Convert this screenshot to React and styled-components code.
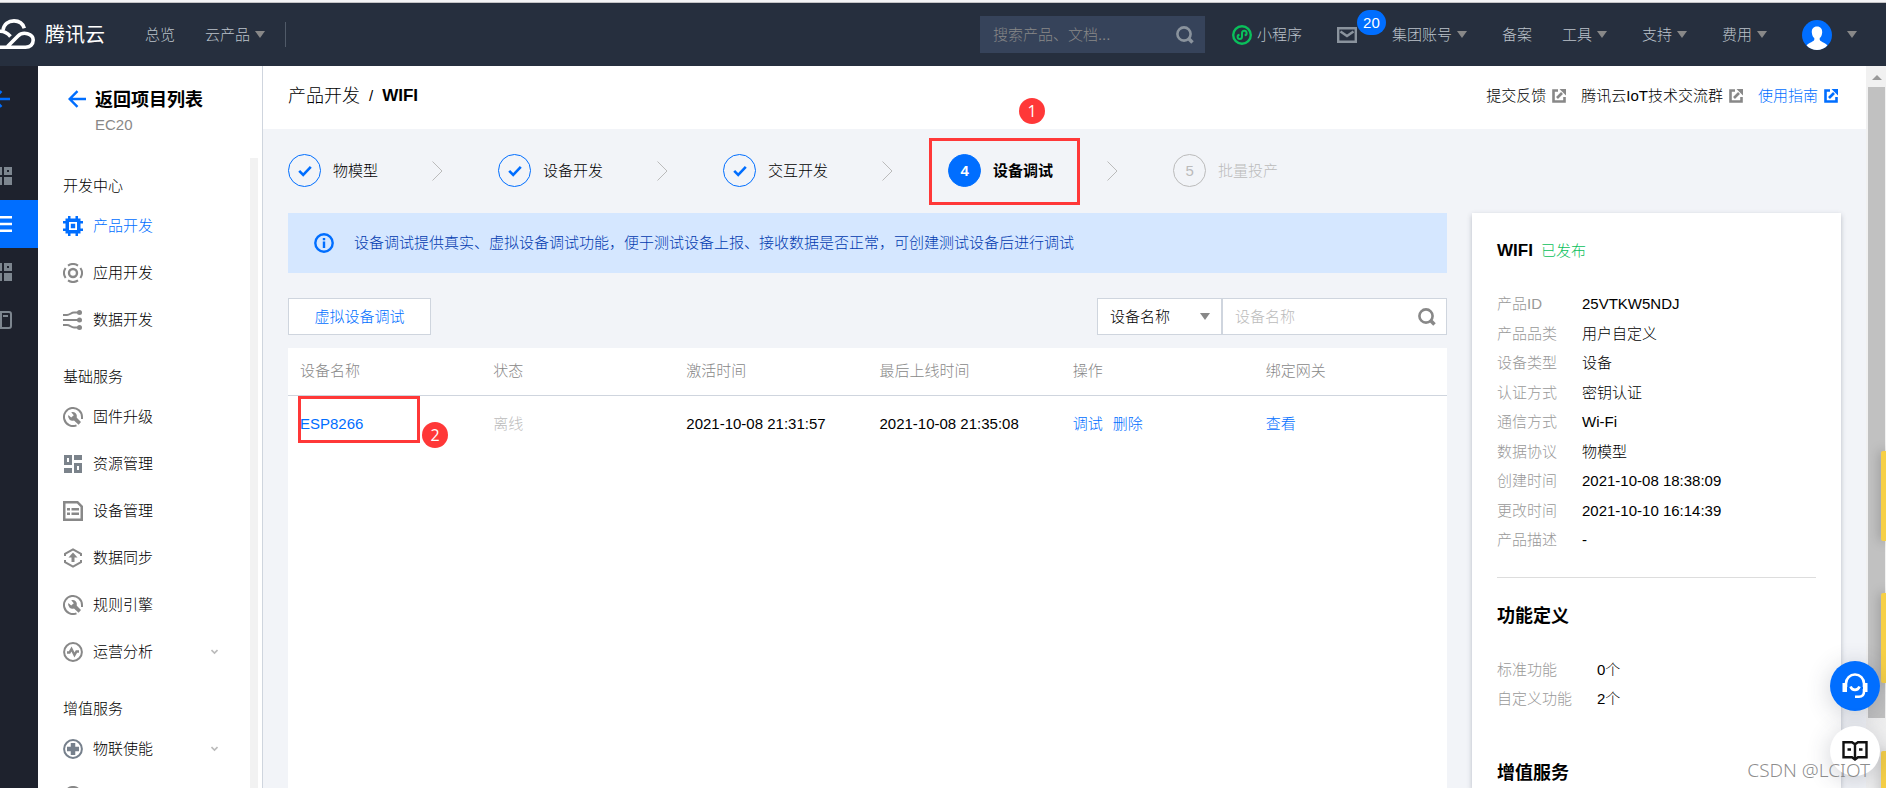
/**
 *
 * App
 *
 */

import React, { useState } from 'react';
import styled, { createGlobalStyle, css } from 'styled-components';

const SANS = "'Liberation Sans', Arial, 'Noto Sans CJK SC', sans-serif";

const BLUE = '#006eff';
const RED = '#ff3838';
const BORDER = '#cfd5de';

const MENU = [
  {
    title: '开发中心',
    items: [
      { name: '产品开发', icon: 'chip', active: true },
      { name: '应用开发', icon: 'target' },
      { name: '数据开发', icon: 'flow' },
    ],
  },
  {
    title: '基础服务',
    items: [
      { name: '固件升级', icon: 'wrench' },
      { name: '资源管理', icon: 'blocks' },
      { name: '设备管理', icon: 'list' },
      { name: '数据同步', icon: 'sync' },
      { name: '规则引擎', icon: 'wrench' },
      { name: '运营分析', icon: 'pulse', expandable: true },
    ],
  },
  {
    title: '增值服务',
    items: [
      { name: '物联使能', icon: 'plus', expandable: true },
      { icon: 'target' },
    ],
  },
];

const STEPS = [
  { name: '物模型', status: 'done' },
  { name: '设备开发', status: 'done' },
  { name: '交互开发', status: 'done' },
  { name: '设备调试', status: 'current' },
  { name: '批量投产', status: 'todo' },
];

const DEVICES = [
  {
    name: 'ESP8266',
    status: '离线',
    activated: '2021-10-08 21:31:57',
    lastOnline: '2021-10-08 21:35:08',
  },
];

const PRODUCT = [
  ['产品ID', '25VTKW5NDJ'],
  ['产品品类', '用户自定义'],
  ['设备类型', '设备'],
  ['认证方式', '密钥认证'],
  ['通信方式', 'Wi-Fi'],
  ['数据协议', '物模型'],
  ['创建时间', '2021-10-08 18:38:09'],
  ['更改时间', '2021-10-10 16:14:39'],
  ['产品描述', '-'],
];

const FEATURES = [['标准功能', '0个'], ['自定义功能', '2个']];

/* icons */

const MENU_ICONS = {
  chip: (
    <g fill="currentColor">
      <path fillRule="evenodd" d="M2.500 2.500h15v15h-15zM6 6v8h8V6z" />
      <path d="M7.800 7.800h4.400v4.400H7.800zM5 0h2.500v3H5zM12.500 0H15v3h-2.500zM5 17h2.500v3H5zM12.500 17H15v3h-2.500zM0 5h3v2.500H0zM0 12.500h3V15H0zM17 5h3v2.500h-3zM17 12.500h3V15h-3z" />
    </g>
  ),
  target: (
    <g fill="none" stroke="currentColor" strokeWidth="2">
      <circle cx="10" cy="10" r="4" strokeWidth="2.4" />
      <path d="M5 2.6a9 9 0 0 1 10 0M5 17.4a9 9 0 0 0 10 0M2.6 5a9 9 0 0 0 0 10M17.4 5a9 9 0 0 1 0 10" />
    </g>
  ),
  flow: (
    <g fill="none" stroke="currentColor" strokeWidth="2">
      <path d="M0 5h4c3 0 4-2.5 7-2.5h4M0 10h15M0 15h4c3 0 4 2.5 7 2.5h4" />
      <g fill="currentColor" stroke="none">
        <circle cx="16.5" cy="2.5" r="2.5" />
        <circle cx="16.5" cy="10" r="2.5" />
        <circle cx="16.5" cy="17.5" r="2.5" />
      </g>
    </g>
  ),
  wrench: (
    <g>
      <path
        d="M13.5 18.3A9 9 0 1 1 19 10v2"
        fill="none"
        stroke="currentColor"
        strokeWidth="2"
      />
      <path
        fill="currentColor"
        d="M8.2 5.2a4.4 4.4 0 0 1 5.6 5.5l4.2 4.2-2.4 2.9-4.6-4.4a4.4 4.4 0 0 1-5.7-5.5l2.9 2.7 2.6-2.4z"
      />
    </g>
  ),
  blocks: (
    <g fill="#7b838b">
      <path fillRule="evenodd" d="M1 1h8v10H1zM4 4v4h2V4zM11 9h8v10h-8zM14 12v4h2v-4z" />
      <path d="M11 1h8v5h-8zM1 14h8v5H1z" />
    </g>
  ),
  list: (
    <g fill="currentColor">
      <path fillRule="evenodd" d="M0 0h15l5 5v15H0zM2.500 2.500v15h15V6L14 2.500z" />
      <path d="M4 7h3v2.500H4zM8.500 7H16v2.500H8.500zM4 11.500h3V14H4zM8.500 11.500H16V14H8.500z" />
    </g>
  ),
  sync: (
    <g fill="none" stroke="currentColor" strokeWidth="2">
      <path d="M2 8V5.800L10 1.300l8 4.500V8M2 12v2.200l8 4.500 8-4.500V12" />
      <path d="M10 8v6" strokeWidth="3" />
      <path d="M10 4.500l4.500 5h-9z" fill="currentColor" stroke="none" />
    </g>
  ),
  pulse: (
    <g fill="none" stroke="currentColor" strokeWidth="2">
      <circle cx="10" cy="10" r="8.900" />
      <path d="M4 10.500h2.500l2-3.500 3 6 2-3.500H16" strokeWidth="2.400" />
    </g>
  ),
  plus: (
    <g fill="none" stroke="#76808c">
      <circle cx="10" cy="10" r="8.900" strokeWidth="2" />
      <path d="M10 4v12M4 10h12" strokeWidth="4.500" />
    </g>
  ),
};

const RAIL_GRID = (
  <svg width="12" height="18" viewBox="6 0 12 18" fill="#7d868f">
    <path fillRule="evenodd" d="M0 0h8v8H0zM10 0h8v8h-8zM13 3v2h2V3z" />
    <path d="M0 10h8v8H0zM10 10h8v8h-8z" />
  </svg>
);

const BackArrow = () => (
  <svg width="18" height="18" viewBox="0 0 18 18" fill="none" stroke={BLUE} strokeWidth="2.4">
    <path d="M18 9H2M9.500 1.200L1.700 9l7.800 7.800" />
  </svg>
);

const SearchIcon = ({ color }) => (
  <svg width="18" height="18" viewBox="0 0 18 18" fill="none" stroke={color}>
    <circle cx="8" cy="8" r="6.600" strokeWidth="2.600" />
    <path d="M12.300 12.300l4.200 4.200" strokeWidth="3.600" />
  </svg>
);

const ExternalIcon = () => (
  <svg width="14" height="14" viewBox="0 0 14 14" fill="none" stroke="currentColor">
    <path d="M6 1.500H1.500v11h11V8" strokeWidth="2.600" />
    <path d="M5 9l5-5" strokeWidth="2.600" />
    <path d="M7.500 0H14v6.500z" fill="currentColor" stroke="none" />
  </svg>
);

const CheckIcon = () => (
  <svg width="14" height="12" viewBox="0 0 14 12" fill="none" stroke={BLUE} strokeWidth="2.600">
    <path d="M1.200 5.800l4 4L12.800 1.800" />
  </svg>
);

class App extends React.PureComponent {
  render() {
    return (
      <Page>
        <GlobalStyle />
        <TopEdge />
        <Header />
        <Body>
          <Rail />
          <Sidebar />
          <Main>
            <PageHead>
              <Breadcrumb aria-label="breadcrumb">
                <a href="#products">产品开发</a>
                <i>/</i>
                <strong>WIFI</strong>
              </Breadcrumb>
              <HeadLinks>
                <HeadLink href="#feedback">
                  提交反馈 <ExternalIcon />
                </HeadLink>
                <HeadLink href="#group">
                  腾讯云IoT技术交流群 <ExternalIcon />
                </HeadLink>
                <HeadLink href="#guide" $primary>
                  使用指南 <ExternalIcon />
                </HeadLink>
              </HeadLinks>
            </PageHead>
            <Content>
              <Steps />
              <Columns>
                <DevicePanel />
                <ProductCard />
              </Columns>
            </Content>
          </Main>
          <Scrollbar aria-hidden="true">
            <ScrollArrow />
            <ScrollThumb />
          </Scrollbar>
        </Body>
        <StickyTabs aria-hidden="true">
          <StickyTab $height={90} />
          <StickyTab $height={90} $gap={52} />
          <StickyTab $height={90} $gap={68} />
        </StickyTabs>
        <FloatingTools>
          <FloatingButton type="button" aria-label="在线客服" $primary>
            <svg width="26" height="26" viewBox="0 0 26 26" fill="none" stroke="#fff" strokeWidth="2.600">
              <path d="M4 14V10.500a9 9 0 0 1 18 0V14" />
              <path d="M22 16v2.500c0 3.500-2 5.200-5 5.200h-4" />
              <path d="M8.500 13.500c1.500 4.500 7.500 4.500 9 0" />
              <path d="M.5 10H5v9H.5zM21 10h4.500v9H21z" fill="#fff" stroke="none" />
            </svg>
          </FloatingButton>
          <FloatingButton type="button" aria-label="文档">
            <svg width="26" height="22" viewBox="0 0 26 22" fill="none" stroke="#111" strokeWidth="2.400">
              <path d="M1.500 2.200H10l3 2 3-2h8.500v15H16l-3 2.300-3-2.300H1.500zM13 4v15" />
              <path d="M5.500 9.500H9M17 9.500h3.500" />
            </svg>
          </FloatingButton>
        </FloatingTools>
        <Watermark>CSDN @LCIOT</Watermark>
      </Page>
    );
  }
}

export default App;

function Header() {
  return (
    <TopBar>
      <Logo href="#home">
        <svg width="36" height="31" viewBox="0 19 36 31" fill="none" stroke="#fff" strokeWidth="3.600">
          <path d="M3 30C4 24 8.500 20.900 14 20.900c5 0 8.800 2.600 10.300 7.300" />
          <path d="M-2 31.500C3 30.500 7 32.500 10.500 36.500" />
          <path d="M7.500 46.500L18 36c5-5 15.200-2.500 15.200 4 0 4.500-3.300 7.200-7.700 7.200H-2" />
        </svg>
        腾讯云
      </Logo>
      <PrimaryNav>
        <NavLink href="#overview">总览</NavLink>
        <NavLink href="#cloud">
          云产品
          <Caret />
        </NavLink>
      </PrimaryNav>
      <TopSearch role="search">
        <input type="text" placeholder="搜索产品、文档..." aria-label="搜索" />
        <SearchIcon color="#8a939d" />
      </TopSearch>
      <UserNav>
        <NavLink href="#mini" $spaced>
          <svg width="20" height="20" viewBox="0 0 20 20" fill="none" stroke="#0abf5b" strokeWidth="2">
            <circle cx="10" cy="10" r="8.800" strokeWidth="2.400" />
            <path d="M7.500 9.700a2.200 2.200 0 1 0 2.500 2.300V8a2.300 2.300 0 1 1 2.700 2.300" />
          </svg>
          小程序
        </NavLink>
        <NavLink href="#messages" aria-label="消息 20" $spaced>
          <svg width="20" height="16" viewBox="0 0 20 16" fill="none" stroke="#8a939d" strokeWidth="2.400">
            <path d="M1.200 1.200h17.600v13.600H1.200zM3.500 4.500l6.500 4.500 6.500-4.500" />
          </svg>
          <MailBadge>20</MailBadge>
        </NavLink>
        <NavLink href="#account">
          集团账号
          <Caret />
        </NavLink>
        <NavLink href="#beian">备案</NavLink>
        {['工具', '支持', '费用'].map(name => (
          <NavLink href="#menu" key={name}>
            {name}
            <Caret />
          </NavLink>
        ))}
        <UserButton type="button" aria-label="用户">
          <svg width="30" height="30" viewBox="0 0 30 30">
            <circle cx="15" cy="15" r="15" fill={BLUE} />
            <path
              fill="#fff"
              d="M15 6.500c3.600 0 5.400 2.600 5.200 5.900-.2 2.700-1.200 4.600-2.500 5.700v1.700c.5 2 5 2.600 7.700 5.600A15 15 0 0 1 15 30 15 15 0 0 1 4.600 25.400c2.700-3 7.200-3.600 7.700-5.600v-1.700c-1.300-1.100-2.300-3-2.500-5.700-.2-3.300 1.600-5.900 5.200-5.900z"
            />
          </svg>
          <Caret />
        </UserButton>
      </UserNav>
    </TopBar>
  );
}

function Rail() {
  return (
    <RailNav aria-label="services">
      <RailBack href="#back" aria-label="返回">
        <svg width="10" height="18" viewBox="8 0 10 18" fill="none" stroke={BLUE} strokeWidth="2.400">
          <path d="M18 9H2M9.500 1.200L1.700 9l7.800 7.800" />
        </svg>
      </RailBack>
      <RailItem href="#r1" aria-label="控制台">
        {RAIL_GRID}
      </RailItem>
      <RailItem href="#r2" aria-label="物联网开发平台" $active>
        <svg width="12" height="16" viewBox="0 0 12 16" fill="#fff">
          <path d="M0 0h12v2.500H0zM0 6.800h12v2.500H0zM0 13.500h12V16H0z" />
        </svg>
      </RailItem>
      <RailItem href="#r3" aria-label="应用">
        {RAIL_GRID}
      </RailItem>
      <RailItem href="#r4" aria-label="文档">
        <svg width="12" height="18" viewBox="0 0 12 18" fill="none" stroke="#7d868f" strokeWidth="2">
          <path d="M-4 1H9q2 0 2 2v12q0 2-2 2H-4M1 1v16M3 5h5" />
        </svg>
      </RailItem>
    </RailNav>
  );
}

function Sidebar() {
  return (
    <Side>
      <SideHead href="#projects">
        <BackArrow />
        <div>
          <SideTitle>返回项目列表</SideTitle>
          <SideSub>EC20</SideSub>
        </div>
      </SideHead>
      <SideBody>
        <SideMenu>
          {MENU.map(group => (
            <li key={group.title}>
              <GroupTitle>{group.title}</GroupTitle>
              {group.items.map(item => (
                <MenuItem href={`#${item.icon}`} key={item.name || item.icon} $active={item.active}>
                  <svg width="20" height="20" viewBox="0 0 20 20">
                    {MENU_ICONS[item.icon]}
                  </svg>
                  {item.name && <span>{item.name}</span>}
                  {item.expandable && (
                    <svg width="7" height="6" viewBox="0 0 7 6" fill="none" stroke="#bbb" strokeWidth="1.600">
                      <path d="M.5 1l3 3 3-3" />
                    </svg>
                  )}
                </MenuItem>
              ))}
            </li>
          ))}
        </SideMenu>
        <SideTrack />
      </SideBody>
    </Side>
  );
}

function Steps() {
  return (
    <StepList>
      {STEPS.map((step, index) => (
        <Step key={step.name} $status={step.status}>
          <StepCircle $status={step.status}>
            {step.status === 'done' ? <CheckIcon /> : index + 1}
          </StepCircle>
          {step.name}
          {step.status === 'current' && (
            <>
              <StepMark />
              <StepMarkNumber>1</StepMarkNumber>
            </>
          )}
          {index < STEPS.length - 1 && (
            <StepArrow width="11" height="20" viewBox="0 0 11 20" fill="none" stroke="#bbb">
              <path d="M.5.5l9.500 9.500-9.500 9.500" />
            </StepArrow>
          )}
        </Step>
      ))}
    </StepList>
  );
}

function DevicePanel() {
  const [keyword, setKeyword] = useState('');

  return (
    <Panel>
      <Alert>
        <svg width="20" height="20" viewBox="0 0 20 20" fill="none" stroke={BLUE} strokeWidth="2.400">
          <circle cx="10" cy="10" r="8.700" />
          <path d="M10 8.500V15M10 5v2.300" />
        </svg>
        设备调试提供真实、虚拟设备调试功能，便于测试设备上报、接收数据是否正常，可创建测试设备后进行调试
      </Alert>
      <Toolbar>
        <OutlineButton type="button">虚拟设备调试</OutlineButton>
        <Filter>
          <SelectWrap>
            <select aria-label="搜索字段" defaultValue="name">
              <option value="name">设备名称</option>
              <option value="remark">设备备注</option>
            </select>
            <SelectCaret />
          </SelectWrap>
          <FilterInput>
            <input
              type="text"
              aria-label="设备名称"
              placeholder="设备名称"
              value={keyword}
              onChange={evt => setKeyword(evt.target.value)}
            />
            <SearchIcon color="#888" />
          </FilterInput>
        </Filter>
      </Toolbar>
      <TableWrap>
        <Table>
          <thead>
            <tr>
              <th>设备名称</th>
              <th>状态</th>
              <th>激活时间</th>
              <th>最后上线时间</th>
              <th>操作</th>
              <th>绑定网关</th>
            </tr>
          </thead>
          <tbody>
            {DEVICES.filter(device => device.name.includes(keyword)).map(device => (
              <tr key={device.name}>
                <MarkedCell>
                  <a href="#device">{device.name}</a>
                  <CellMark />
                  <CellMarkNumber>2</CellMarkNumber>
                </MarkedCell>
                <MutedCell>{device.status}</MutedCell>
                <td>{device.activated}</td>
                <td>{device.lastOnline}</td>
                <td>
                  <RowActions>
                    <a href="#debug">调试</a>
                    <a href="#delete">删除</a>
                  </RowActions>
                </td>
                <td>
                  <a href="#gateway">查看</a>
                </td>
              </tr>
            ))}
          </tbody>
        </Table>
      </TableWrap>
    </Panel>
  );
}

function ProductCard() {
  return (
    <Card>
      <CardTitle>
        <strong>WIFI</strong> <span>已发布</span>
      </CardTitle>
      <InfoList $labelWidth={85} $minHeight={256}>
        {PRODUCT.map(([label, value]) => (
          <div key={label}>
            <dt>{label}</dt>
            <dd>{value}</dd>
          </div>
        ))}
      </InfoList>
      <Divider />
      <SectionTitle>功能定义</SectionTitle>
      <InfoList $labelWidth={100}>
        {FEATURES.map(([label, value]) => (
          <div key={label}>
            <dt>{label}</dt>
            <dd>{value}</dd>
          </div>
        ))}
      </InfoList>
      <SectionTitle $spaced>增值服务</SectionTitle>
    </Card>
  );
}

const GlobalStyle = createGlobalStyle`
  * {
    box-sizing: border-box;
  }

  body {
    margin: 0;
    color: #000;
    font: 300 15px/20px ${SANS};
  }

  a {
    color: ${BLUE};
    text-decoration: none;
  }

  button,
  input,
  select {
    font: inherit;
    border: 0;
    padding: 0;
    background: transparent;
    outline: none;
  }

  svg {
    flex: none;
  }

  ul, ol, dl, dd, h2, p {
    margin: 0;
    padding: 0;
    list-style: none;
  }
`;

const Page = styled.div`
  position: relative;
  display: flex;
  flex-direction: column;
  height: 100vh;
  overflow: hidden;
`;

const TopEdge = styled.div`
  flex: none;
  height: 3px;
  background: #f4f4f6;
  border-bottom: 1px solid #c4c4c6;
`;

const TopBar = styled.header`
  display: flex;
  flex: none;
  align-items: center;
  height: 63px;
  padding-right: 29px;
  background: #262f3e;
`;

const Logo = styled.a`
  display: flex;
  align-items: center;
  gap: 9px;
  color: #fff;
  font-size: 20px;
  font-weight: 400;
`;

const PrimaryNav = styled.nav`
  display: flex;
  align-items: center;
  gap: 30px;
  margin-left: 40px;
  padding-right: 15px;
  border-right: 1px solid #505a68;
  line-height: 25px;
`;

const NavLink = styled.a`
  position: relative;
  display: flex;
  align-items: center;
  gap: 5px;
  color: #bcc3cb;
  white-space: nowrap;

  ${({ $spaced }) =>
    $spaced &&
    css`
      padding-right: 5px;
    `};
`;

const Caret = styled.span`
  width: 10px;
  border: 5px solid transparent;
  border-top: 7px solid #888;
  border-bottom: 0;
  margin-right: 5px;
`;

const TopSearch = styled.form`
  display: flex;
  align-items: center;
  width: 225px;
  height: 37px;
  margin-left: auto;
  padding: 0 11px 0 13px;
  background: #36435a;

  input {
    flex: 1;
    min-width: 0;
    color: #fff;

    &::placeholder {
      color: #888;
    }
  }
`;

const UserNav = styled.nav`
  display: flex;
  align-items: center;
  gap: 30px;
  margin-left: 27px;
`;

const MailBadge = styled.span`
  position: absolute;
  left: 20px;
  bottom: 8px;
  width: 29px;
  border-radius: 13px;
  color: #fff;
  background: ${BLUE};
  line-height: 25px;
  text-align: center;
`;

const UserButton = styled.button`
  display: flex;
  align-items: center;
  gap: 15px;
  margin-right: -5px;
`;

const Body = styled.div`
  display: flex;
  flex: 1;
  min-height: 0;
`;

const RailNav = styled.nav`
  flex: none;
  width: 38px;
  background: #1e222d;
`;

const RailItem = styled.a`
  display: flex;
  align-items: center;
  height: 48px;
  background: ${({ $active }) => ($active ? BLUE : 'transparent')};
`;

const RailBack = styled(RailItem)`
  height: 66px;
  margin-bottom: 20px;
`;

const Side = styled.aside`
  display: flex;
  flex: none;
  flex-direction: column;
  width: 225px;
  border-right: 1px solid ${BORDER};
  background: #fff;
`;

const SideHead = styled.a`
  display: flex;
  gap: 9px;
  height: 86px;
  padding: 24px 0 0 30px;
  flex: none;
`;

const SideTitle = styled.div`
  color: #000;
  font-size: 18px;
  font-weight: bold;
`;

const SideSub = styled.div`
  margin-top: 5px;
  color: #888;
`;

const SideBody = styled.div`
  display: flex;
  flex: 1;
  min-height: 0;
`;

const SideMenu = styled.ul`
  flex: 1;
  overflow: hidden;
`;

const GroupTitle = styled.p`
  padding: 24px 25px 6px;
`;

const MenuItem = styled.a`
  display: flex;
  align-items: center;
  gap: 10px;
  height: 47px;
  padding: 0 32px 0 25px;
  color: ${({ $active }) => ($active ? BLUE : '#000')};

  svg {
    color: ${({ $active }) => ($active ? BLUE : '#888')};
  }

  span {
    flex: 1;
  }
`;

const SideTrack = styled.div`
  width: 8px;
  margin: 6px 4px 0 0;
  background: #f2f2f2;
`;

const Main = styled.main`
  display: flex;
  flex: 1;
  flex-direction: column;
  min-width: 0;
  background: #f2f4f8;
`;

const PageHead = styled.div`
  display: flex;
  flex: none;
  align-items: center;
  justify-content: space-between;
  height: 63px;
  padding: 0 28px 4px 25px;
  background: #fff;
`;

const Breadcrumb = styled.nav`
  display: flex;
  align-items: center;
  gap: 9px;
  font-size: 18px;

  a {
    color: #000;
  }

  i {
    font-size: 15px;
    font-style: normal;
  }

  strong {
    font-size: 17px;
    font-weight: bold;
  }
`;

const HeadLinks = styled.div`
  display: flex;
  gap: 15px;
`;

const HeadLink = styled.a`
  display: flex;
  align-items: center;
  gap: 6px;
  color: ${({ $primary }) => ($primary ? BLUE : '#000')};

  svg {
    color: ${({ $primary }) => ($primary ? BLUE : '#888')};
  }
`;

const Content = styled.div`
  display: flex;
  flex: 1;
  flex-direction: column;
  gap: 26px;
  min-height: 0;
  padding: 25px 25px 0;
`;

const StepList = styled.ol`
  display: flex;
`;

const Step = styled.li`
  position: relative;
  display: flex;
  align-items: center;
  gap: 12px;
  color: ${({ $status }) => ($status === 'todo' ? '#bbb' : '#000')};
  font-weight: ${({ $status }) => ($status === 'current' ? 'bold' : 'inherit')};
`;

const StepCircle = styled.span`
  display: flex;
  align-items: center;
  justify-content: center;
  width: 33px;
  height: 33px;
  border: 1px solid ${({ $status }) => ($status === 'todo' ? '#bbb' : BLUE)};
  border-radius: 50%;

  ${({ $status }) =>
    $status === 'current' &&
    css`
      color: #fff;
      background: ${BLUE};
    `};
`;

const StepArrow = styled.svg`
  margin: 0 55px 0 42px;
`;

const markBox = css`
  position: absolute;
  border: 3px solid ${RED};
  pointer-events: none;
`;

const markNumber = css`
  position: absolute;
  width: 26px;
  border-radius: 50%;
  color: #fff;
  background: ${RED};
  font-family: 'Open Sans', sans-serif;
  font-size: 16px;
  font-weight: 400;
  line-height: 26px;
  text-align: center;
`;

const StepMark = styled.span`
  ${markBox};
  top: -16px;
  left: -19px;
  width: 151px;
  height: 67px;
`;

const StepMarkNumber = styled.span`
  ${markNumber};
  top: -56px;
  left: 71px;
`;

const Columns = styled.div`
  display: flex;
  flex: 1;
  gap: 25px;
  min-height: 0;
`;

const Panel = styled.section`
  display: flex;
  flex: 1;
  flex-direction: column;
  min-width: 0;
`;

const Alert = styled.div`
  display: flex;
  align-items: center;
  gap: 20px;
  min-height: 60px;
  padding: 0 26px;
  color: #003aaf;
  background: #d5e7ff;
`;

const Toolbar = styled.div`
  display: flex;
  justify-content: space-between;
  margin: 25px 0 13px;
`;

const OutlineButton = styled.button`
  min-width: 143px;
  height: 37px;
  border: 1px solid ${BORDER};
  color: ${BLUE};
  background: #fff;
`;

const Filter = styled.div`
  display: flex;
  height: 37px;
`;

const SelectWrap = styled.div`
  position: relative;
  width: 125px;
  border: 1px solid ${BORDER};
  background: #fff;

  select {
    width: 100%;
    height: 100%;
    padding-left: 12px;
    color: #000;
    appearance: none;
  }
`;

const SelectCaret = styled(Caret)`
  position: absolute;
  top: 14px;
  right: 6px;
  pointer-events: none;
`;

const FilterInput = styled.div`
  display: flex;
  align-items: center;
  width: 225px;
  padding: 0 10px 0 12px;
  border: 1px solid ${BORDER};
  background: #fff;

  input {
    flex: 1;
    min-width: 0;

    &::placeholder {
      color: #bbb;
    }
  }
`;

const TableWrap = styled.div`
  flex: 1;
  background: #fff;
`;

const Table = styled.table`
  width: 100%;
  table-layout: fixed;
  border-collapse: collapse;

  th,
  td {
    height: 57px;
    padding: 0 12px;
    text-align: left;
  }

  th {
    height: 47px;
    border-bottom: 1px solid ${BORDER};
    color: #888;
    font-weight: inherit;
  }
`;

const MutedCell = styled.td`
  color: #bbb;
`;

const MarkedCell = styled.td`
  position: relative;
`;

const CellMark = styled.span`
  ${markBox};
  top: 0;
  left: 10px;
  width: 122px;
  height: 47px;
`;

const CellMarkNumber = styled.span`
  ${markNumber};
  top: 26px;
  left: 134px;
`;

const RowActions = styled.div`
  display: flex;
  gap: 10px;
`;

const Card = styled.aside`
  flex: none;
  width: 369px;
  padding: 28px 25px;
  background: #fff;
  box-shadow: 0 2px 5px rgba(54, 58, 80, 0.3);
`;

const CardTitle = styled.h2`
  display: flex;
  align-items: center;
  gap: 8px;
  margin-bottom: 33px;
  font-size: 17px;

  span {
    color: #0abf5b;
    font-size: 15px;
    font-weight: 300;
  }
`;

const InfoList = styled.dl`
  display: flex;
  flex-direction: column;
  justify-content: space-between;
  gap: 9px;
  min-height: ${({ $minHeight = 0 }) => $minHeight}px;

  div {
    display: flex;
    min-height: 20px;
  }

  dt {
    width: ${({ $labelWidth }) => $labelWidth}px;
    color: #999;
  }
`;

const Divider = styled.hr`
  height: 1px;
  margin: 27px 0 28px;
  border: 0;
  background: #ddd;
`;

const SectionTitle = styled.h2`
  margin: ${({ $spaced }) => ($spaced ? '54px 0 0' : '0 0 34px')};
  font-size: 18px;
`;

const Scrollbar = styled.div`
  display: flex;
  flex: none;
  flex-direction: column;
  align-items: center;
  width: 20px;
  padding: 9px 1px 0 2px;
  background: #f1f1f1;
`;

const ScrollArrow = styled.span`
  border: 5px solid transparent;
  border-top: 0;
  border-bottom-color: #999;
`;

const ScrollThumb = styled.div`
  width: 100%;
  height: 631px;
  margin-top: 7px;
  background: #c1c1c1;
`;

const StickyTabs = styled.div`
  position: absolute;
  top: 451px;
  right: 0;
`;

const StickyTab = styled.div`
  width: 5px;
  height: ${({ $height }) => $height}px;
  margin-top: ${({ $gap = 0 }) => $gap}px;
  border-radius: 2px 0 0 2px;
  background: #f7d046;
  box-shadow: 0 0 12px rgba(0, 0, 0, 0.35);
`;

const FloatingTools = styled.div`
  position: absolute;
  right: 6px;
  bottom: 12px;
  display: flex;
  flex-direction: column;
  gap: 15px;
`;

const FloatingButton = styled.button`
  display: flex;
  align-items: center;
  justify-content: center;
  width: 50px;
  height: 50px;
  border-radius: 50%;
  background: ${({ $primary }) => ($primary ? BLUE : '#fff')};
  box-shadow: 0 4px 24px rgba(54, 58, 80, 0.24);
`;

const Watermark = styled.div`
  position: absolute;
  right: 16px;
  bottom: 8px;
  color: rgba(120, 120, 120, 0.85);
  font-family: 'Noto Sans', sans-serif;
  font-size: 19px;
  pointer-events: none;
`;
